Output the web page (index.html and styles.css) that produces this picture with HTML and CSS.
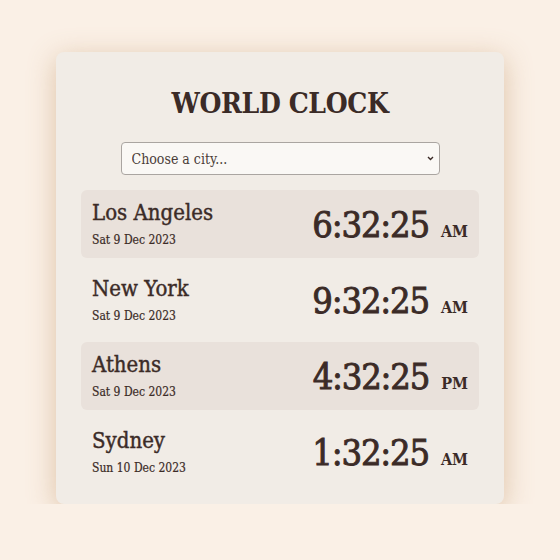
FILE: index.html
```html
<!DOCTYPE html>
<html lang="en">
<head>
<meta charset="utf-8">
<title>World Clock</title>
<link rel="stylesheet" href="styles.css">
</head>
<body>
<main class="card">
  <h1 class="title">WORLD CLOCK</h1>
  <div class="picker-wrap">
    <select class="picker">
      <option>Choose a city...</option>
    </select>
    <svg class="chev" width="7" height="5" viewBox="0 0 7 5" aria-hidden="true"><path d="M1 1 L3.5 3.5 L6 1" fill="none" stroke="#3b2b27" stroke-width="1.4"/></svg>
  </div>
  <div class="list">
    <div class="city shaded">
      <div class="info"><div class="name">Los Angeles</div><div class="date">Sat 9 Dec 2023</div></div>
      <div class="time">6:32:25 <span class="ampm">AM</span></div>
    </div>
    <div class="city">
      <div class="info"><div class="name">New York</div><div class="date">Sat 9 Dec 2023</div></div>
      <div class="time">9:32:25 <span class="ampm">AM</span></div>
    </div>
    <div class="city shaded">
      <div class="info"><div class="name">Athens</div><div class="date">Sat 9 Dec 2023</div></div>
      <div class="time">4:32:25 <span class="ampm">PM</span></div>
    </div>
    <div class="city">
      <div class="info"><div class="name">Sydney</div><div class="date">Sun 10 Dec 2023</div></div>
      <div class="time">1:32:25 <span class="ampm">AM</span></div>
    </div>
  </div>
</main>
</body>
</html>
```
FILE: styles.css
```css
html, body { margin: 0; padding: 0; }
body {
  background: #faf0e6;
  font-family: "DejaVu Serif", "Liberation Serif", serif;
  font-stretch: condensed;
  color: #3b2b27;
  padding-top: 52px;
}
.card {
  width: 448px;
  box-sizing: border-box;
  margin: 0 auto;
  background: #f1ece6;
  border-radius: 8px;
  padding: 25px 25px 18px;
  box-shadow: 0 6px 28px rgba(190, 140, 90, 0.45);
  display: flex;
  flex-direction: column;
  align-items: center;
}
.title {
  margin: 0 0 11px;
  height: 54px;
  line-height: 54px;
  font-size: 28px;
  font-weight: bold;
  letter-spacing: -0.4px;
}
.picker-wrap {
  position: relative;
  width: 319px;
  height: 33px;
  margin-bottom: 15px;
}
.picker {
  -webkit-appearance: none;
  appearance: none;
  width: 100%;
  height: 100%;
  box-sizing: border-box;
  font-family: inherit;
  font-stretch: condensed;
  font-size: 14px;
  color: #4a3d38;
  background: #faf8f5;
  border: 1px solid #aaa5a1;
  border-radius: 4px;
  padding: 0 10px;
}
.chev {
  position: absolute;
  right: 6px;
  top: 14px;
  pointer-events: none;
}
.list {
  align-self: stretch;
  display: flex;
  flex-direction: column;
  gap: 8px;
}
.city {
  height: 68px;
  box-sizing: border-box;
  padding: 0 11px;
  border-radius: 6px;
  display: flex;
  align-items: center;
  justify-content: space-between;
}
.city.shaded { background: #e9e1db; }
.name { font-size: 22px; line-height: 28px; -webkit-text-stroke: 0.4px currentColor; }
.date { font-size: 12px; line-height: 18px; margin-top: 4px; -webkit-text-stroke: 0.2px currentColor; }
.time { font-size: 36px; letter-spacing: -1.2px; -webkit-text-stroke: 0.9px currentColor; }
.ampm { font-size: 16px; font-weight: bold; letter-spacing: 0; margin-left: 3px; -webkit-text-stroke: 0; }
```
